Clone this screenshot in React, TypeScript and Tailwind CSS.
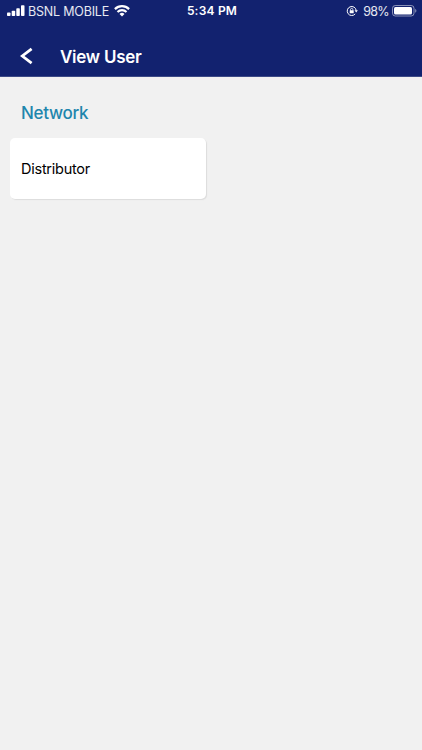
import type { ReactNode } from "react"

function SignalIcon() {
  return (
    <svg width="18" height="12" viewBox="0 0 18 12" fill="white">
      <rect x="0" y="7.5" width="3.5" height="3.5" rx="0.8" />
      <rect x="4.7" y="5.7" width="3.5" height="5.3" rx="0.8" />
      <rect x="9.3" y="3.3" width="3.5" height="7.7" rx="0.8" />
      <rect x="14" y="0.3" width="3.5" height="10.7" rx="0.8" />
    </svg>
  )
}

function WifiIcon() {
  return (
    <svg width="16" height="12" viewBox="0 0 16 12" fill="none" stroke="white">
      <path d="M0.9 4.1a10.2 10.2 0 0 1 14.2 0" strokeWidth="2.2" />
      <path d="M3.5 7a6.4 6.4 0 0 1 9 0" strokeWidth="2.1" />
      <path d="M8 11.6 5.5 9a3.6 3.6 0 0 1 5 0z" fill="white" stroke="none" />
    </svg>
  )
}

function RotationLockIcon() {
  return (
    <svg width="12" height="12" viewBox="0 0 12 12" fill="none" stroke="white">
      <path d="M9.2 8.9A4.5 4.5 0 1 1 10.2 5.4" strokeWidth="1" />
      <path d="M8.5 5.3h3.4l-1.7 2.3z" fill="white" stroke="none" />
      <rect x="3.7" y="5.3" width="4" height="3" rx="0.4" fill="white" stroke="none" />
      <path d="M4.5 5.6V4.6a1.2 1.2 0 0 1 2.4 0v1" strokeWidth="0.8" />
    </svg>
  )
}

function BatteryIcon() {
  return (
    <svg width="25" height="12" viewBox="0 0 25 12" fill="none">
      <rect x="0.5" y="0.5" width="21.5" height="10.5" rx="2.8" stroke="white" strokeOpacity="0.5" />
      <rect x="2" y="2" width="18" height="7.5" rx="1.5" fill="white" />
      <path d="M23.2 4v3.7c0.8-0.3 1.2-1 1.2-1.85s-0.4-1.55-1.2-1.85z" fill="white" fillOpacity="0.5" />
    </svg>
  )
}

function StatusBar() {
  return (
    <div className="grid h-[22px] grid-cols-[1fr_auto_1fr] items-center pr-[5px] pl-[7px]">
      <div className="flex items-center">
        <SignalIcon />
        <span className="ml-[3px] pt-px text-[12.5px] leading-[21px] tracking-[-0.2px] whitespace-nowrap text-white/90">
          BSNL MOBILE
        </span>
        <div className="ml-[5px]">
          <WifiIcon />
        </div>
      </div>
      <span className="text-[12px] leading-[22px] font-semibold tracking-[0.2px]">5:34 PM</span>
      <div className="flex items-center justify-end">
        <RotationLockIcon />
        <span className="ml-[5px] pt-px text-[12.5px] leading-[21px] tracking-[-0.65px] text-white/90">98%</span>
        <div className="ml-[3px]">
          <BatteryIcon />
        </div>
      </div>
    </div>
  )
}

function Header({ title }: { title: string }) {
  return (
    <header className="h-[77px] border-b border-[#3c4a86] bg-[#12226f] text-white">
      <StatusBar />
      <div className="flex h-[54px] items-center pt-[15px] pl-5">
        <button type="button" aria-label="Back" className="-mt-[1px]">
          <svg width="13" height="18" viewBox="0 0 13 18" fill="none" stroke="white" strokeWidth="2.8">
            <path d="M11.6 1.8 2.3 9l9.3 7.2" />
          </svg>
        </button>
        <h1 className="ml-[27px] text-[17px] leading-6 font-semibold tracking-[-0.25px]">{title}</h1>
      </div>
    </header>
  )
}

function Card({ children }: { children: ReactNode }) {
  return (
    <div className="flex h-[61px] w-[196px] items-center rounded-[5px] bg-white px-[11px] text-[14.5px] tracking-[-0.25px] text-black shadow-[1px_1px_1px_#dcdcdc]">
      {children}
    </div>
  )
}

export default function App() {
  return (
    <div className="h-[750px] w-[422px] overflow-hidden bg-[#f1f1f1] font-['Inter',sans-serif]">
      <Header title="View User" />
      <main className="px-[10px] pt-6">
        <h2 className="mb-[13px] ml-[11px] text-[17px] leading-6 font-medium tracking-[-0.3px] text-[#1f86ad]">
          Network
        </h2>
        <Card>Distributor</Card>
      </main>
    </div>
  )
}
